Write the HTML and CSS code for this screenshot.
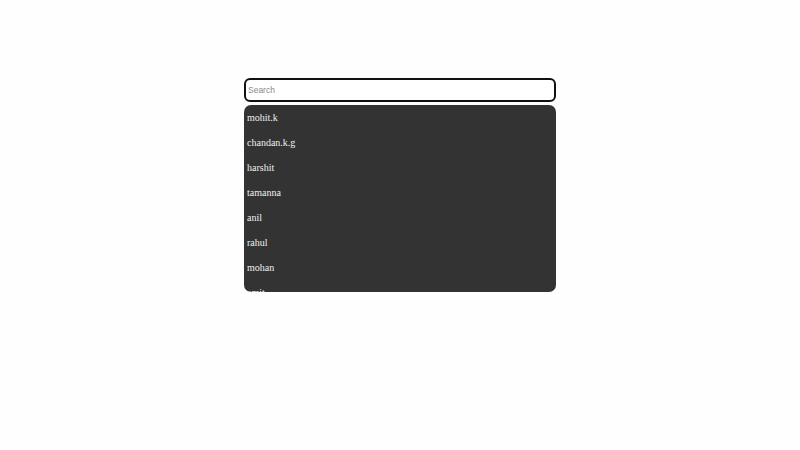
FILE: index.html
```html
<!DOCTYPE html>
<html lang="en">
<head>
<meta charset="utf-8">
<title>Search</title>
<link rel="stylesheet" href="styles.css">
</head>
<body>
<div class="wrap">
  <input class="search" type="text" placeholder="Search">
  <ul class="list">
    <li>mohit.k</li>
    <li>chandan.k.g</li>
    <li>harshit</li>
    <li>tamanna</li>
    <li>anil</li>
    <li>rahul</li>
    <li>mohan</li>
    <li>amit</li>
  </ul>
</div>
</body>
</html>
```
FILE: styles.css
```css
html, body {
  margin: 0;
  padding: 0;
  background: #fefefe;
}
.wrap {
  width: 312px;
  margin: 78px auto 0;
  display: flex;
  flex-direction: column;
  gap: 3px;
}
.search {
  box-sizing: border-box;
  width: 100%;
  height: 24px;
  margin: 0;
  border: 2px solid #111;
  border-radius: 6px;
  padding: 0 2px;
  font-family: "Liberation Sans", Arial, sans-serif;
  font-size: 8.5px;
  color: #222;
  background: #fff;
  outline: none;
}
.search::placeholder {
  color: #8a8a8a;
}
.list {
  list-style: none;
  margin: 0;
  padding: 0;
  height: 187px;
  overflow: hidden;
  background: #333333;
  border-radius: 7px;
}
.list li {
  height: 25px;
  line-height: 25px;
  padding-left: 3px;
  font-family: "Liberation Serif", "Times New Roman", serif;
  font-size: 10px;
  color: #f0f0f0;
}
```
